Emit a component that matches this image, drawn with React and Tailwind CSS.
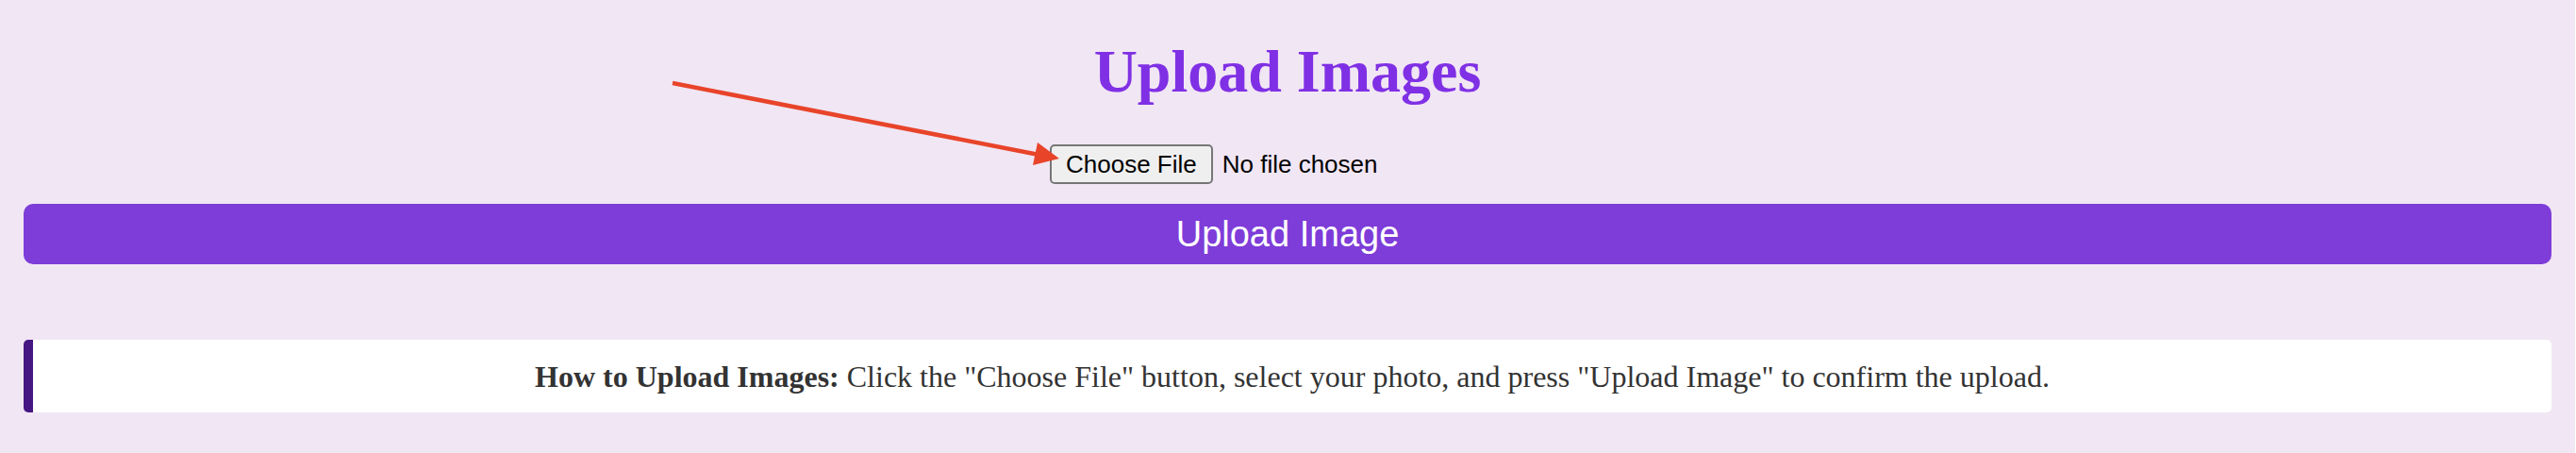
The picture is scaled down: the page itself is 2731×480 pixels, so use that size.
import React from 'react';

const Arrow = () => (
  <svg
    className="absolute left-0 top-0 pointer-events-none"
    width="1200"
    height="220"
    viewBox="0 0 1200 220"
  >
    <line x1="713" y1="88" x2="1099" y2="163.5" stroke="#e8442a" strokeWidth="4.5" />
    <polygon points="1123,168 1095,175 1100,151" fill="#e8442a" />
  </svg>
);

const FilePicker = () => (
  <div className="w-[504px] flex items-center gap-[10px] font-['Liberation_Sans',Arial,sans-serif] text-[26px] text-black">
    <button
      type="button"
      className="h-[42px] px-[15px] bg-[#efefef] border-2 border-[#767676] rounded-[5px] leading-none"
    >
      Choose File
    </button>
    <span className="leading-none">No file chosen</span>
  </div>
);

export default function App() {
  return (
    <div className="relative min-h-[480px] bg-[#f1e6f4] px-[25px] pt-[39px] pb-10 mr-px">
      <Arrow />
      <h1 className="text-center font-['Liberation_Serif',Times,serif] font-bold text-[64px] leading-[74px] text-[#8030e4]">
        Upload Images
      </h1>

      <div className="mt-[40px] flex justify-center">
        <FilePicker />
      </div>

      <button
        type="button"
        className="mt-[21px] w-full h-[64px] rounded-[10px] bg-[#7e3cd9] text-white text-[38px] font-['Liberation_Sans',Arial,sans-serif] leading-none"
      >
        Upload Image
      </button>

      <div className="mt-[80px] h-[77px] flex items-center justify-center bg-white border-l-[10px] border-[#461682] rounded-[5px] px-5 font-['Liberation_Serif',Times,serif] text-[32px] text-[#333333]">
        <p>
          <strong>How to Upload Images:</strong> Click the "Choose File" button, select your photo, and press "Upload Image" to confirm the upload.
        </p>
      </div>
    </div>
  );
}
